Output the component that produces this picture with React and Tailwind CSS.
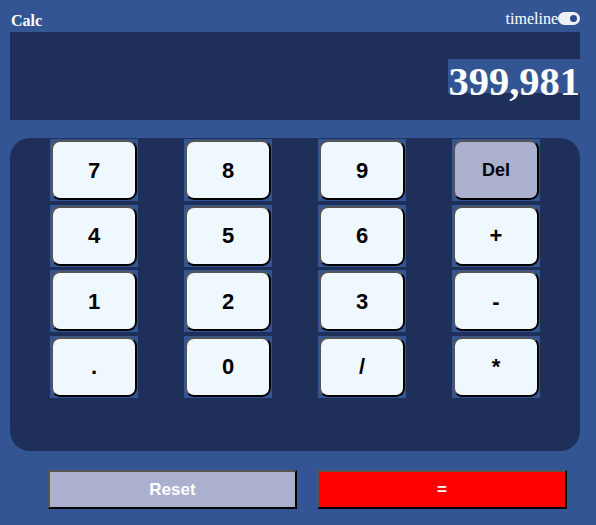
import React from 'react';

const keys = ['7', '8', '9', 'Del', '4', '5', '6', '+', '1', '2', '3', '-', '.', '0', '/', '*'];

const Key = ({ label }) => {
  const isDel = label === 'Del';
  return (
    <div className="h-[62px] bg-[#335593] p-px">
      <button
        className={`w-full h-full rounded-[9px] border-2 border-[#555] border-b-black border-r-black font-bold text-black ${
          isDel ? 'bg-[#abb0cf] text-[18px]' : 'bg-[#f0f8ff] text-[22px]'
        }`}
      >
        {label}
      </button>
    </div>
  );
};

export default function App() {
  return (
    <div className="w-[596px] h-[525px] bg-[#335593] font-['Liberation_Sans',Arial,sans-serif] overflow-hidden">
      <div className="flex justify-between h-[32px] pl-[11px] pr-[16px]">
        <span className="font-['Liberation_Serif','Times_New_Roman',serif] font-bold text-white text-[16px] leading-none mt-[13px]">
          Calc
        </span>
        <div className="flex items-start mt-[10px]">
          <span className="font-['Liberation_Serif','Times_New_Roman',serif] text-white text-[16px] leading-[18px]">
            timeline
          </span>
          <span className="relative mt-[2px] w-[22px] h-[13px] rounded-full bg-[#eef0f5]">
            <span className="absolute right-[3px] top-[3px] w-[7px] h-[7px] rounded-full bg-[#2a4a8a]" />
          </span>
        </div>
      </div>

      <div className="mx-[10px] mr-[16px] h-[88px] bg-[#1e305a] flex items-center justify-end">
        <div className="h-[34px] bg-[#335593] pl-0 font-['Liberation_Serif','Times_New_Roman',serif] font-bold text-white text-[40.5px] leading-[46px]">
          399,981
        </div>
      </div>

      <div className="mt-[18px] ml-[10px] mr-[16px] h-[313px] bg-[#1e305a] rounded-[20px] px-[40px] pt-px">
        <div className="grid grid-cols-4 gap-x-[46px] gap-y-[3.5px]">
          {keys.map((k) => (
            <Key key={k} label={k} />
          ))}
        </div>
      </div>

      <div className="flex gap-[20px] pl-[48px] mt-[19px]">
        <button className="w-[249px] h-[39px] bg-[#abb0cf] border-2 border-[#555] border-b-black border-r-black text-white font-bold text-[17px]">
          Reset
        </button>
        <button className="w-[250px] h-[39px] bg-[#ff0000] border-2 border-[#555] border-b-black border-r-black text-white font-bold text-[17px]">
          =
        </button>
      </div>
    </div>
  );
}
